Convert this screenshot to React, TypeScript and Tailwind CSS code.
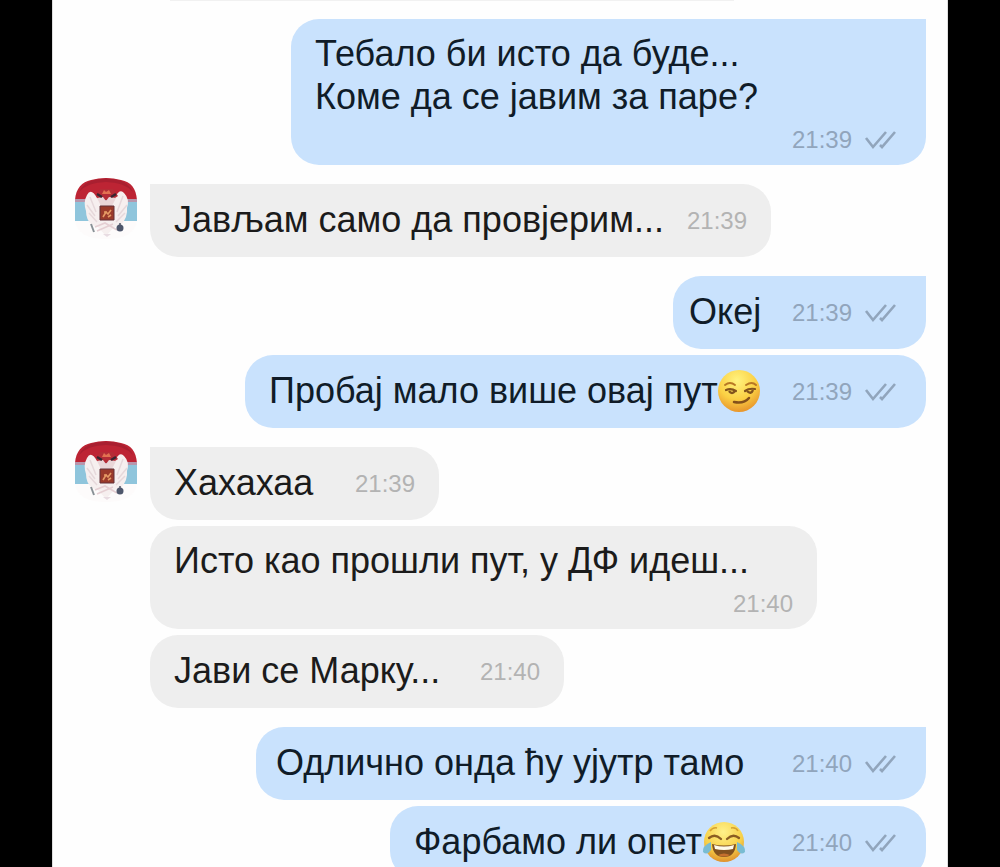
import React from "react";
import clsx from "clsx";

type Message = {
  id: number;
  text: string;
  time: string;
  emoji?: "smirk" | "joy";
  stacked?: boolean;
  layout: string;
};

type Group = { id: number; mine: boolean; messages: Message[] };

const groups: Group[] = [
  {
    id: 1,
    mine: true,
    messages: [
      { id: 1, text: "Тебало би исто да буде...\nКоме да се јавим за паре?", time: "21:39", stacked: true, layout: "w-[635px] pl-6" },
    ],
  },
  {
    id: 2,
    mine: false,
    messages: [{ id: 2, text: "Јављам само да провјерим...", time: "21:39", layout: "w-[621px] pl-6" }],
  },
  {
    id: 3,
    mine: true,
    messages: [
      { id: 3, text: "Океј", time: "21:39", layout: "w-[253px] pl-4" },
      { id: 4, text: "Пробај мало више овај пут", emoji: "smirk", time: "21:39", layout: "w-[681px] pl-6" },
    ],
  },
  {
    id: 4,
    mine: false,
    messages: [
      { id: 5, text: "Хахахаа", time: "21:39", layout: "w-[289px] pl-6" },
      { id: 6, text: "Исто као прошли пут, у ДФ идеш...", time: "21:40", stacked: true, layout: "w-[667px] pl-6" },
      { id: 7, text: "Јави се Марку...", time: "21:40", layout: "w-[414px] pl-6" },
    ],
  },
  {
    id: 5,
    mine: true,
    messages: [
      { id: 8, text: "Одлично онда ћу ујутр тамо", time: "21:40", layout: "w-[670px] pl-5" },
      { id: 9, text: "Фарбамо ли опет", emoji: "joy", time: "21:40", layout: "w-[536px] pl-6" },
    ],
  },
];

function Avatar() {
  return (
    <svg viewBox="0 0 64 62" className="h-[62px] w-16 shrink-0" aria-hidden="true">
      <path d="M1 43V22C2 10 8 4 17 2Q32-2 47 2C57 4 62 10 63 22V43Z" fill="#bd2434" />
      <path d="M5 14Q14 4 32 4T59 14Q54 4 44 2Q32-1 20 2Q10 4 5 14Z" fill="#a91f30" />
      <path d="M1 22H63V43H1Z" fill="#8fc5dc" />
      <path d="M1 21H63V24H1Z" fill="#b896ac" />
      <path d="M1 43H63Q60 61 32 61T1 43Z" fill="#fdfbfb" />
      <path d="M23 20Q17 9 13 17Q9 24 12 33Q12 42 18 47L24 49L32 58L40 49L47 47Q54 39 53 30Q56 21 50 15Q46 10 41 19L33 24Z" fill="#f6efef" />
      <path d="M16 19L22 34M13 27L21 38M15 35L23 44M49 18L43 34M53 27L44 38M51 35L42 44" stroke="#e6d8db" strokeWidth="1.5" fill="none" />
      <path d="M22 18L26 11H39L44 18L38 22H28Z" fill="#b52c36" />
      <path d="M23 20L29 19L32 23L35 19L42 20L38 28H27Z" fill="#ead6d8" />
      <path d="M23 16L28 19M42 16L37 19" stroke="#382431" strokeWidth="2.4" fill="none" />
      <path d="M28 16L30 12L32 14L35 12L37 16Z" fill="#e27251" />
      <path d="M26 28H40V42H26Z" fill="#9a3a2b" stroke="#633139" strokeWidth="1" />
      <path d="M29 39L32 34L34 36L37 32M30 34H33M34 39L37 37" stroke="#e59b65" strokeWidth="1.6" fill="none" />
      <path d="M21 49L31 45L43 52M23 53L39 46" stroke="#e5cfd3" strokeWidth="1.6" fill="none" />
      <path d="M17 46L20 54" stroke="#899196" strokeWidth="2" />
      <path d="M46 45V48" stroke="#777b87" strokeWidth="2" />
      <circle cx="46" cy="50" r="3.5" fill="#4e566b" />
      <path d="M29 56L33 59L37 56Z" fill="#e8dce2" />
    </svg>
  );
}

function Smirk() {
  return (
    <svg viewBox="0 0 44 44" className="h-11 w-11 shrink-0" role="img" aria-label="smirk">
      <defs>
        <radialGradient id="smirkFace" cx="45%" cy="25%" r="75%">
          <stop offset="0" stopColor="#fff380" />
          <stop offset="0.6" stopColor="#fbd044" />
          <stop offset="1" stopColor="#e8962c" />
        </radialGradient>
      </defs>
      <circle cx="21" cy="22" r="21" fill="url(#smirkFace)" />
      <path d="M7 16Q12 12 17 16M28 16Q34 12 38 16" stroke="#b87824" strokeWidth="2" fill="none" strokeLinecap="round" />
      <path d="M8 21Q13 19 18 22M27 22Q31 19 37 20" stroke="#82531d" strokeWidth="2.2" fill="none" strokeLinecap="round" />
      <path d="M11 22Q14 26 17 22M29 22Q33 26 35 21" stroke="#82531d" strokeWidth="2.4" fill="none" />
      <path d="M16 33Q26 35 31 29" stroke="#84501b" strokeWidth="2.5" fill="none" strokeLinecap="round" />
    </svg>
  );
}

function Joy() {
  return (
    <svg viewBox="0 0 44 44" className="h-11 w-11 shrink-0" role="img" aria-label="tears of joy">
      <defs>
        <radialGradient id="joyFace" cx="48%" cy="25%" r="75%">
          <stop offset="0" stopColor="#fff18a" />
          <stop offset="0.65" stopColor="#f7d048" />
          <stop offset="1" stopColor="#df912e" />
        </radialGradient>
      </defs>
      <circle cx="22" cy="22" r="20" fill="url(#joyFace)" />
      <path d="M8 11Q11 7 15 8M29 8Q34 7 36 11" stroke="#d6a332" strokeWidth="1.5" fill="none" />
      <path d="M7 18Q13 13 19 19M25 19Q31 13 37 18" stroke="#8a5d22" strokeWidth="2.3" fill="none" strokeLinecap="round" />
      <path d="M10 24Q22 27 34 24Q33 37 22 37T10 24Z" fill="#81511f" />
      <path d="M12 25Q22 28 32 25L31 29Q22 31 13 29Z" fill="#fffbea" />
      <path d="M16 35Q22 32 28 35Q22 38 16 35Z" fill="#c5702e" />
      <path d="M9 22Q0 26 1 32Q5 36 9 30Z" fill="#79bcd2" />
      <path d="M35 22Q44 26 43 32Q39 36 35 30Z" fill="#79bcd2" />
    </svg>
  );
}

function ReadTicks() {
  return (
    <svg viewBox="0 0 34 20" className="h-5 w-[34px]" fill="none" stroke="currentColor" strokeWidth="2.6" role="img" aria-label="read">
      <path d="M2 8L9 17L22 2M16 15L18 17L31 2" />
    </svg>
  );
}

function Meta({ time, mine }: { time: string; mine: boolean }) {
  return (
    <span className={clsx("flex shrink-0 items-center gap-3 text-2xl leading-6", mine ? "text-[#91a5bc]" : "text-[#b3b3b3]")}>
      <time>{time}</time>
      {mine && <ReadTicks />}
    </span>
  );
}

function Bubble({ message, mine, first }: { message: Message; mine: boolean; first: boolean }) {
  return (
    <li
      className={clsx(
        "flex max-w-full rounded-[28px]",
        message.layout,
        mine ? "bg-[#c9e2fd] pr-7 text-[#101c28]" : "bg-[#eeeeee] pr-6 text-[#1b1b1b]",
        first && (mine ? "rounded-tr-none" : "rounded-tl-none"),
        message.stacked ? "flex-col pt-[13px] pb-[3px]" : "h-[73px] items-center justify-between pb-0.5"
      )}
    >
      <p className="flex items-center text-4xl leading-[43px] whitespace-pre">
        {message.text}
        {message.emoji === "smirk" && <Smirk />}
        {message.emoji === "joy" && <Joy />}
      </p>
      <div className={clsx("flex", message.stacked ? "h-11 items-center justify-end" : "pt-0.5")}>
        <Meta time={message.time} mine={mine} />
      </div>
    </li>
  );
}

export default function App() {
  return (
    <div className="h-screen overflow-hidden bg-black px-[52px] font-['Liberation_Sans',Arial,sans-serif]">
      <main className="flex h-full flex-col overflow-hidden border-x border-[#dedede] bg-[#fefefe] px-[21px]">
        <div className="mr-48 ml-24 h-px shrink-0 bg-[#f1f1f1]" />
        <div className="flex flex-col gap-[19px] pt-[18px]">
          {groups.map((group) => (
            <section key={group.id} className={clsx("flex", group.mine ? "justify-end" : "gap-3")}>
              {!group.mine && (
                <div className="-mt-1.5 h-0 shrink-0">
                  <Avatar />
                </div>
              )}
              <ul className={clsx("flex min-w-0 flex-col gap-1.5", group.mine ? "items-end" : "items-start")}>
                {group.messages.map((message, index) => (
                  <Bubble key={message.id} message={message} mine={group.mine} first={index === 0} />
                ))}
              </ul>
            </section>
          ))}
        </div>
      </main>
    </div>
  );
}
